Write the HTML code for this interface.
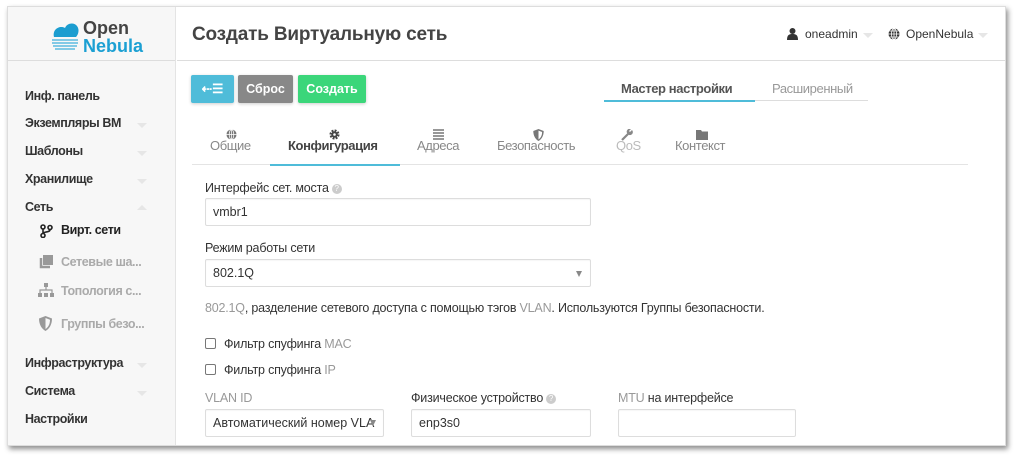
<!DOCTYPE html>
<html><head><meta charset="utf-8"><style>
*{box-sizing:border-box;margin:0;padding:0}
body{width:1020px;height:460px;background:#fff;font-family:"Liberation Sans",sans-serif;position:relative;overflow:hidden;color:#333}
#app{position:absolute;left:7px;top:6px;width:999px;height:440px;background:#fff;border:1px solid #ddd;box-shadow:2px 3px 5px rgba(0,0,0,.45);overflow:hidden}
#side{position:absolute;left:0;top:0;width:168px;height:440px;background:#f7f7f7;border-right:1px solid #e4e4e4}
#logo{height:54px;border-bottom:1px solid #ddd;position:relative}
.a{position:absolute;white-space:nowrap;letter-spacing:-0.4px}
.mi{font-size:12.5px;font-weight:bold;color:#333;left:17px}
.car{position:absolute;left:129px;width:0;height:0;border-left:5px solid transparent;border-right:5px solid transparent;border-top:5px solid #e6e6e6}
.caru{border-top:none;border-bottom:5px solid #e6e6e6}
.sub{font-size:12.5px;color:#aaa;left:53px;font-weight:bold}
#hdr{position:absolute;left:169px;top:0;right:0;height:54px;border-bottom:1px solid #ddd}
.btn{position:absolute;top:68px;height:28px;border-radius:2px;color:#fff;font-size:12.5px;font-weight:bold;text-align:center;line-height:28px;box-shadow:0 1px 3px rgba(0,0,0,.2)}
.tab{position:absolute;top:131px;font-size:13px;color:#888;text-align:center}
.ic{position:absolute;top:122px}
.lbl{font-size:12.5px;color:#333;letter-spacing:-0.2px}
.inp{position:absolute;height:28px;border:1px solid #ddd;border-radius:2px;font-size:12.5px;padding-left:7px;line-height:26px;box-shadow:inset 0 1px 1px rgba(0,0,0,.04)}
.tri{position:absolute;width:0;height:0;border-left:3.5px solid transparent;border-right:3.5px solid transparent;border-top:6px solid #888}
.cb{position:absolute;left:196px;width:11px;height:11px;border:1px solid #777;border-radius:2px;background:#fff}
.q{display:inline-block;width:10px;height:10px;border-radius:50%;background:#ccc;color:#fff;font-size:8px;text-align:center;line-height:10px;vertical-align:1px;margin-left:3px;letter-spacing:0}
</style></head><body>
<div id="app">
<div id="side">
 <div id="logo">
  <svg style="position:absolute;left:42px;top:12px" width="30" height="32" viewBox="0 0 30 32"><path d="M4 18 C2 10 10 6 15 9 C17 4 24 3 27 7 C30 11 28 16 26 18 Z" fill="#1b9dd0"/><path d="M2 21 H28 M2 24 H28 M3 27 H27 M5 30 H25" stroke="#5bbbe0" stroke-width="1.6"/></svg>
  <div class="a" style="left:75px;top:11px;font-size:18px;color:#444;letter-spacing:0;font-weight:bold">Open</div>
  <div class="a" style="left:75px;top:29px;font-size:18px;color:#1ca0d3;letter-spacing:0;font-weight:bold">Nebula</div>
 </div>
 <div class="a mi" style="top:82px">Инф. панель</div>
 <div class="a mi" style="top:109px">Экземпляры ВМ</div><div class="car" style="top:116px"></div>
 <div class="a mi" style="top:137px">Шаблоны</div><div class="car" style="top:144px"></div>
 <div class="a mi" style="top:165px">Хранилище</div><div class="car" style="top:172px"></div>
 <div class="a mi" style="top:193px">Сеть</div><div class="car caru" style="top:198px"></div>
 <svg style="position:absolute;left:32px;top:217px" width="13" height="14" viewBox="0 0 13 14"><circle cx="3" cy="3" r="2" fill="none" stroke="#222" stroke-width="1.6"/><circle cx="3" cy="11.5" r="2" fill="none" stroke="#222" stroke-width="1.6"/><circle cx="10" cy="3.5" r="2" fill="none" stroke="#222" stroke-width="1.6"/><path d="M3 5V9.5M10 5.5C10 9 4 7 3.5 9.5" fill="none" stroke="#222" stroke-width="1.6"/></svg>
 <div class="a" style="left:53px;top:216px;font-size:12.5px;font-weight:bold;color:#222">Вирт. сети</div>
 <svg style="position:absolute;left:30px;top:247px" width="16" height="16" viewBox="0 0 16 16"><rect x="5" y="1" width="10" height="10" fill="#999"/><path d="M3 4V13H12" fill="none" stroke="#999" stroke-width="2.5"/></svg>
 <div class="a sub" style="top:248px">Сетевые ша...</div>
 <svg style="position:absolute;left:29px;top:276px" width="18" height="15" viewBox="0 0 18 15"><rect x="7" y="0" width="4" height="4" fill="#999"/><path d="M9 4V7M3 10V7H15V10" fill="none" stroke="#999" stroke-width="1.2"/><rect x="1" y="10" width="4" height="4" fill="#999"/><rect x="7" y="10" width="4" height="4" fill="#999"/><rect x="13" y="10" width="4" height="4" fill="#999"/></svg>
 <div class="a sub" style="top:277px">Топология с...</div>
 <svg style="position:absolute;left:31px;top:309px" width="13" height="15" viewBox="0 0 13 15"><path d="M6.5 0L13 2.5C13 9 10 13 6.5 15C3 13 0 9 0 2.5Z" fill="#999"/><path d="M6.5 2L11 3.8C11 8.5 9 11.5 6.5 13Z" fill="#f7f7f7"/></svg>
 <div class="a sub" style="top:310px">Группы безо...</div>
 <div class="a mi" style="top:349px">Инфраструктура</div><div class="car" style="top:356px"></div>
 <div class="a mi" style="top:377px">Система</div><div class="car" style="top:384px"></div>
 <div class="a mi" style="top:405px">Настройки</div>
</div>
<div id="hdr">
 <div class="a" style="left:15px;top:17px;font-size:19px;font-weight:bold;color:#444;letter-spacing:-0.2px">Создать Виртуальную сеть</div>
 <svg style="position:absolute;left:610px;top:21px" width="11" height="12" viewBox="0 0 11 12"><circle cx="5.5" cy="3" r="3" fill="#333"/><path d="M0 12C0 7 2 6 5.5 6S11 7 11 12Z" fill="#333"/></svg>
 <div class="a" style="left:628px;top:20px;font-size:12px;color:#333;letter-spacing:0">oneadmin</div>
 <div class="car" style="left:686px;top:26px"></div>
 <svg style="position:absolute;left:711px;top:21px" width="12" height="12" viewBox="0 0 12 12"><circle cx="6" cy="6" r="5.5" fill="#333"/><path d="M0.5 6H11.5M6 .5V11.5M1.5 3H10.5M1.5 9H10.5" stroke="#fff" stroke-width=".8"/><ellipse cx="6" cy="6" rx="2.5" ry="5.5" fill="none" stroke="#fff" stroke-width=".8"/></svg>
 <div class="a" style="left:729px;top:20px;font-size:12px;color:#333;letter-spacing:0">OpenNebula</div>
 <div class="car" style="left:801px;top:26px"></div>
</div>
<div class="btn" style="left:183px;width:43px;background:#4fbcd9">⇠☰</div>
<div class="btn" style="left:230px;width:55px;background:#888">Сброс</div>
<div class="btn" style="left:290px;width:68px;background:#3bd67a">Создать</div>
<div class="a" style="left:613px;top:74px;font-size:13px;font-weight:bold;color:#555">Мастер настройки</div>
<div class="a" style="left:764px;top:74px;font-size:13px;color:#999">Расширенный</div>
<div style="position:absolute;left:596px;top:93px;width:151px;height:2px;background:#4fbcd9"></div>
<div style="position:absolute;left:747px;top:93px;width:113px;height:1px;background:#ddd"></div>
<svg class="ic" style="left:218px" width="11" height="11" viewBox="0 0 12 12"><circle cx="6" cy="6" r="5.5" fill="#777"/><path d="M0.5 6H11.5M6 .5V11.5" stroke="#fff" stroke-width=".8"/><ellipse cx="6" cy="6" rx="2.5" ry="5.5" fill="none" stroke="#fff" stroke-width=".8"/></svg>
<div class="tab a" style="left:202px">Общие</div>
<svg class="ic" style="left:321px" width="11" height="11" viewBox="0 0 12 12"><circle cx="6" cy="6" r="4.2" fill="none" stroke="#444" stroke-width="2.6" stroke-dasharray="2 1.3"/><circle cx="6" cy="6" r="3.5" fill="#444"/><circle cx="6" cy="6" r="1.4" fill="#fff"/></svg>
<div class="tab a" style="left:280px;font-weight:bold;color:#444">Конфигурация</div>
<div style="position:absolute;left:184px;top:157px;width:776px;height:1px;background:#e4e4e4"></div>
<div style="position:absolute;left:262px;top:157px;width:130px;height:2px;background:#4fbcd9"></div>
<svg class="ic" style="left:425px" width="11" height="11" viewBox="0 0 11 11"><path d="M0 1H11M0 4H11M0 7H11M0 10H11" stroke="#777" stroke-width="1.4"/></svg>
<div class="tab a" style="left:409px">Адреса</div>
<svg class="ic" style="left:525px" width="11" height="12" viewBox="0 0 13 15"><path d="M6.5 0L13 2.5C13 9 10 13 6.5 15C3 13 0 9 0 2.5Z" fill="#777"/><path d="M6.5 2L11 3.8C11 8.5 9 11.5 6.5 13Z" fill="#fff"/></svg>
<div class="tab a" style="left:489px">Безопасность</div>
<svg class="ic" style="left:613px" width="12" height="12" viewBox="0 0 12 12"><path d="M1 11L7 5" stroke="#888" stroke-width="2.2"/><path d="M6 4A3 3 0 1 0 11 1L9 3L8 2L10 0A3 3 0 0 0 6 4Z" fill="#888"/></svg>
<div class="tab a" style="left:608px;color:#bbb">QoS</div>
<svg class="ic" style="left:688px" width="12" height="11" viewBox="0 0 12 11"><path d="M0 1H5L6 2.5H12V11H0Z" fill="#777"/></svg>
<div class="tab a" style="left:667px">Контекст</div>
<div class="a lbl" style="left:197px;top:174px">Интерфейс сет. моста<span class="q">?</span></div>
<div class="inp" style="left:197px;top:191px;width:386px">vmbr1</div>
<div class="a lbl" style="left:197px;top:234px">Режим работы сети</div>
<div class="inp" style="left:197px;top:252px;width:386px">802.1Q</div><div class="tri" style="left:568px;top:264px"></div>
<div class="a lbl" style="left:197px;top:294px"><span style="color:#999">802.1Q</span>, разделение сетевого доступа с помощью тэгов <span style="color:#999">VLAN</span>. Используются Группы безопасности.</div>
<div class="cb" style="top:331px;left:197px"></div><div class="a lbl" style="left:216px;top:330px">Фильтр спуфинга <span style="color:#999">MAC</span></div>
<div class="cb" style="top:357px;left:197px"></div><div class="a lbl" style="left:216px;top:356px">Фильтр спуфинга <span style="color:#999">IP</span></div>
<div class="a lbl" style="left:197px;top:384px;color:#999">VLAN ID</div>
<div class="inp" style="left:197px;top:402px;width:179px">Автоматический номер VLA</div><div class="tri" style="left:362px;top:413px"></div>
<div class="a lbl" style="left:403px;top:384px">Физическое устройство<span class="q">?</span></div>
<div class="inp" style="left:403px;top:402px;width:180px">enp3s0</div>
<div class="a lbl" style="left:610px;top:384px"><span style="color:#999">MTU</span> на интерфейсе</div>
<div class="inp" style="left:610px;top:402px;width:178px"></div>
</div>
</body></html>
